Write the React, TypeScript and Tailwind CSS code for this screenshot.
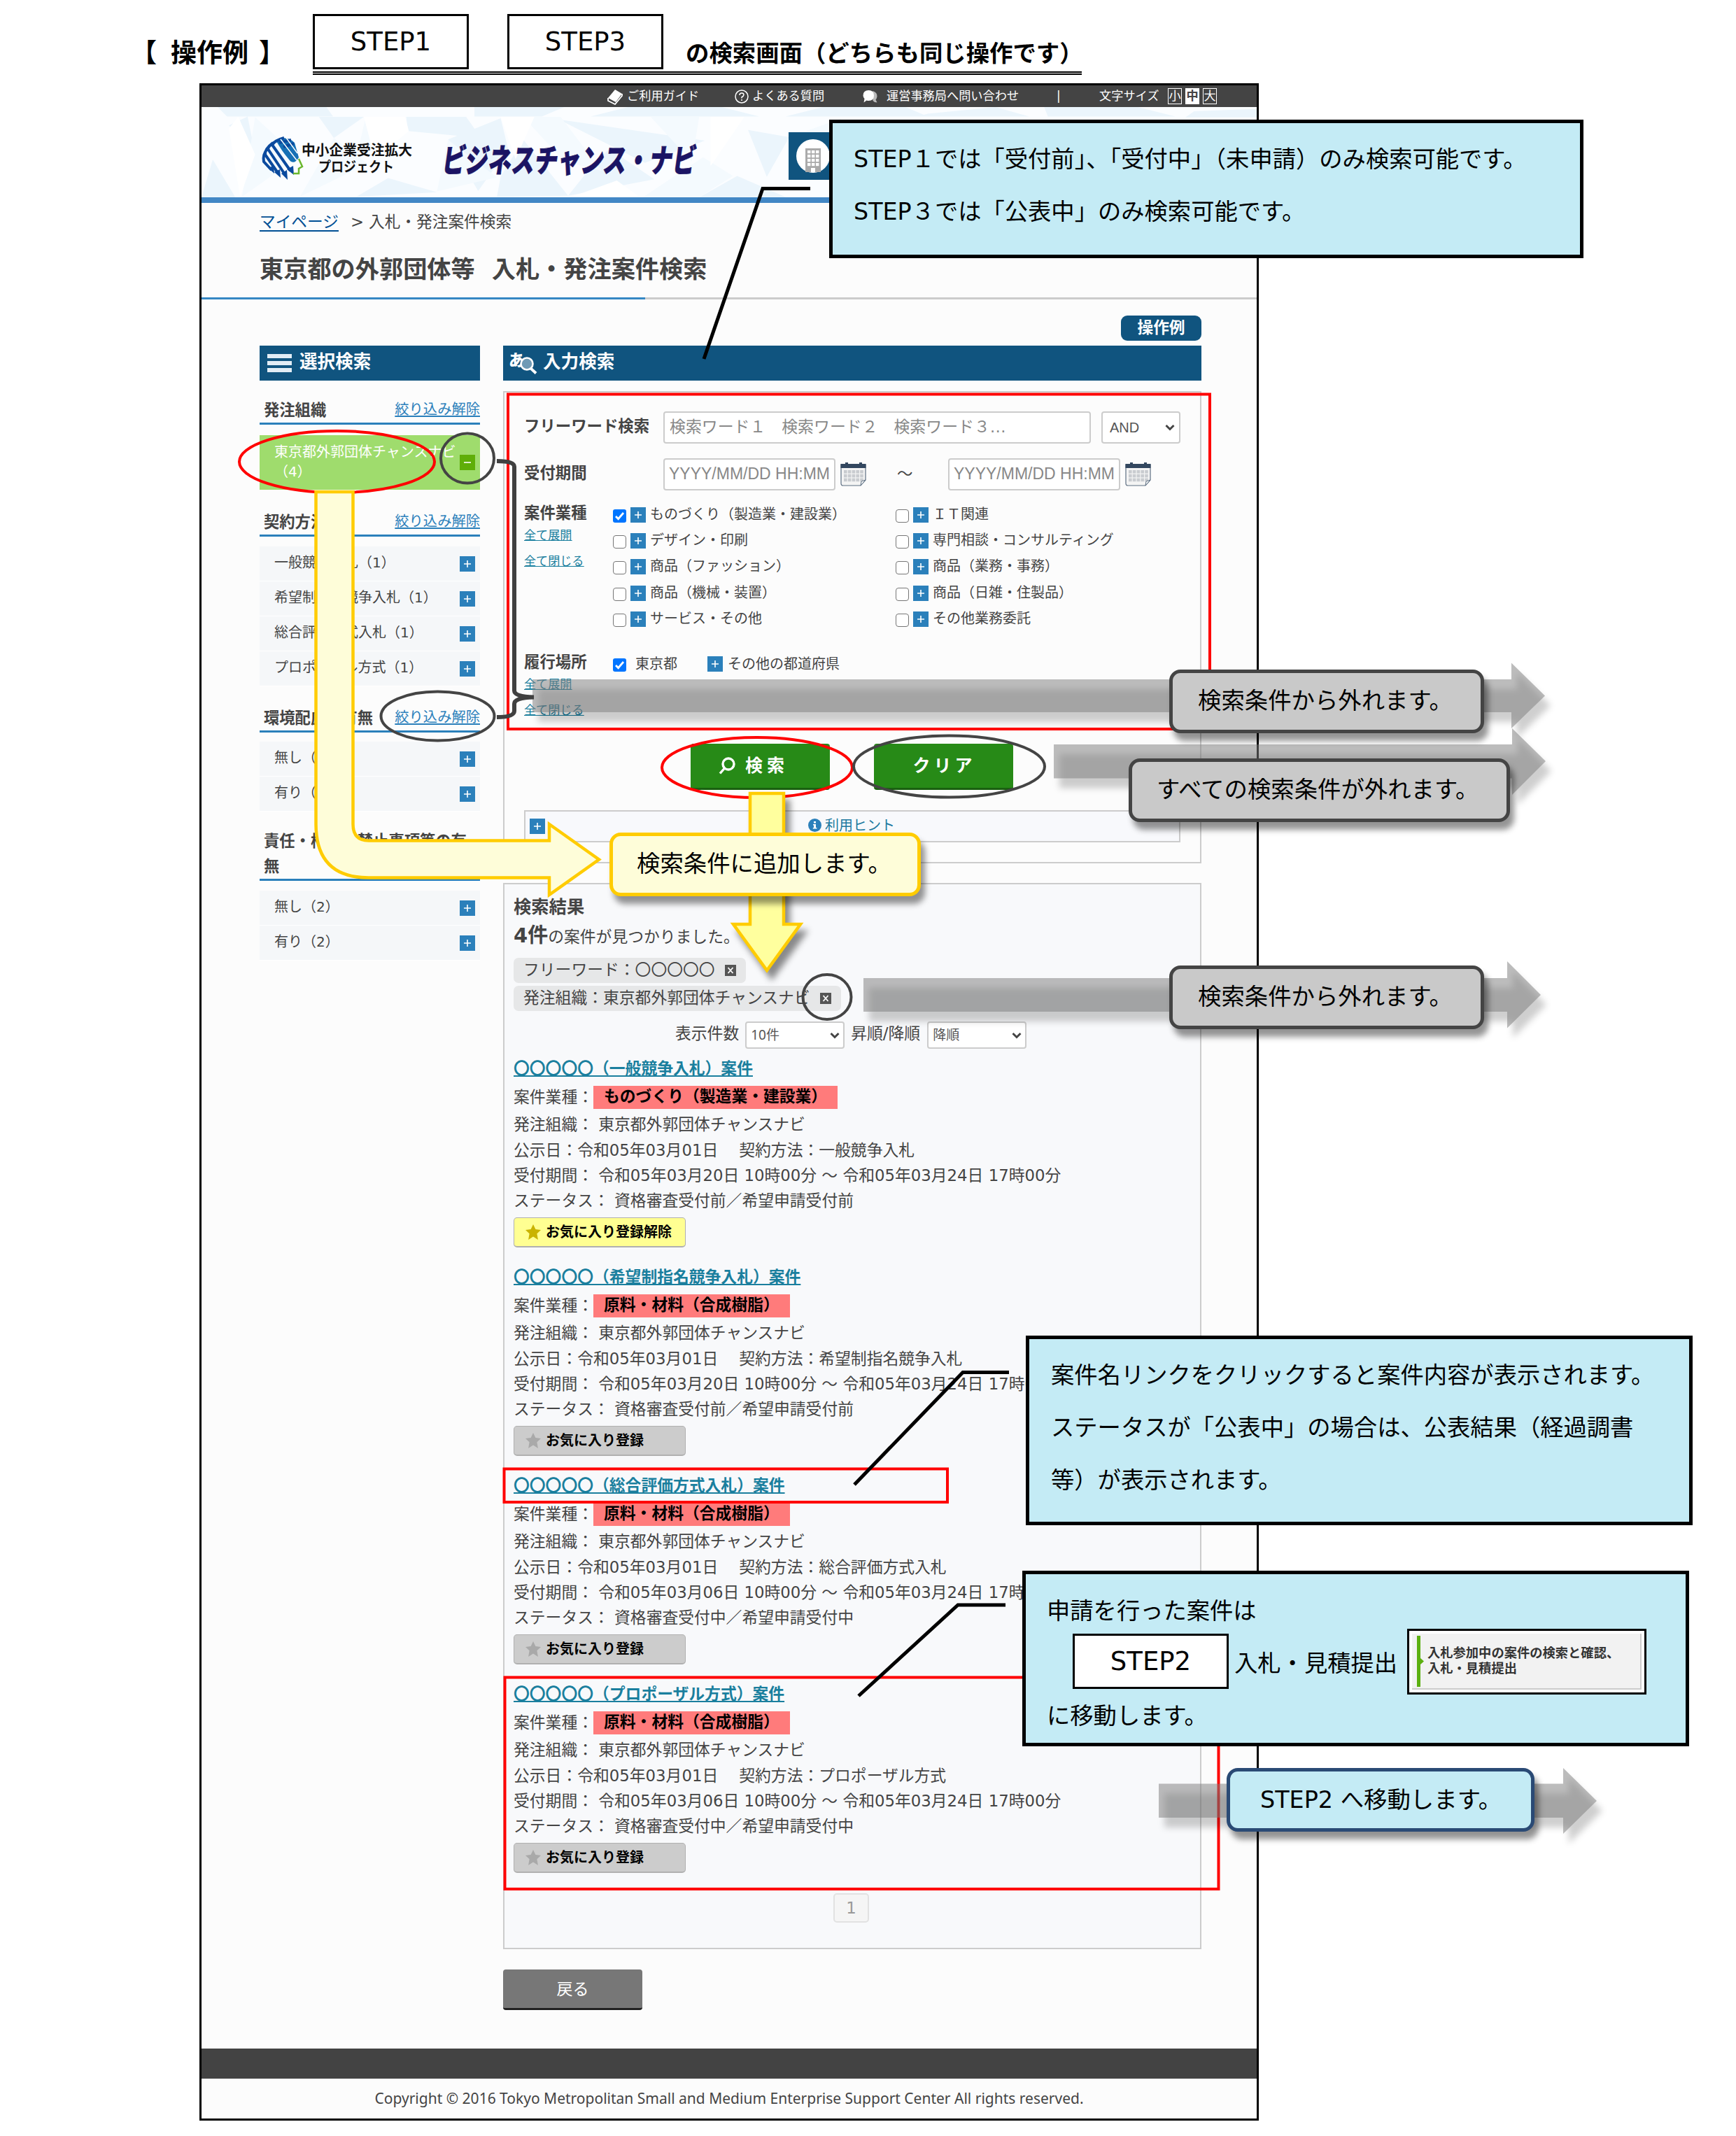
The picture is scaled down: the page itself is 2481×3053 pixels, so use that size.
import type { ReactNode } from "react";
import clsx from "clsx";

interface FacetGroup {
  title: string;
  clearable: boolean;
  headClass: string;
  items: string[];
}

interface ResultItem {
  name: string;
  category: string;
  method: string;
  start: string;
  status: string;
  favorite: boolean;
}

const facetGroups: FacetGroup[] = [
  {
    title: "契約方法",
    clearable: true,
    headClass: "h-[67px] mb-[14px]",
    items: ["一般競争入札（1）", "希望制指名競争入札（1）", "総合評価方式入札（1）", "プロポーザル方式（1）"],
  },
  {
    title: "環境配慮の有無",
    clearable: true,
    headClass: "h-[66px] mb-[13px]",
    items: ["無し（2）", "有り（2）"],
  },
  {
    title: "責任・権限の禁止事項等の有無",
    clearable: false,
    headClass: "h-[99px] mb-[14px]",
    items: ["無し（2）", "有り（2）"],
  },
];

const leftCategories = [
  "ものづくり（製造業・建設業）",
  "デザイン・印刷",
  "商品（ファッション）",
  "商品（機械・装置）",
  "サービス・その他",
];

const rightCategories = [
  "ＩＴ関連",
  "専門相談・コンサルティング",
  "商品（業務・事務）",
  "商品（日雑・住製品）",
  "その他業務委託",
];

const results: ResultItem[] = [
  {
    name: "〇〇〇〇〇（一般競争入札）案件",
    category: "ものづくり（製造業・建設業）",
    method: "一般競争入札",
    start: "令和05年03月20日",
    status: "資格審査受付前／希望申請受付前",
    favorite: true,
  },
  {
    name: "〇〇〇〇〇（希望制指名競争入札）案件",
    category: "原料・材料（合成樹脂）",
    method: "希望制指名競争入札",
    start: "令和05年03月20日",
    status: "資格審査受付前／希望申請受付前",
    favorite: false,
  },
  {
    name: "〇〇〇〇〇（総合評価方式入札）案件",
    category: "原料・材料（合成樹脂）",
    method: "総合評価方式入札",
    start: "令和05年03月06日",
    status: "資格審査受付中／希望申請受付中",
    favorite: false,
  },
  {
    name: "〇〇〇〇〇（プロポーザル方式）案件",
    category: "原料・材料（合成樹脂）",
    method: "プロポーザル方式",
    start: "令和05年03月06日",
    status: "資格審査受付中／希望申請受付中",
    favorite: false,
  },
];

function PlusBox({ minus = false }: { minus?: boolean }) {
  return (
    <span className={clsx("flex size-[22px] shrink-0 items-center justify-center", minus ? "bg-[#5fae09]" : "bg-[#2b80bb]")}>
      <svg width="12" height="12" viewBox="0 0 12 12" stroke="#fff" strokeWidth="1.6">
        <path d={minus ? "M1 6h10" : "M1 6h10M6 1v10"} />
      </svg>
    </span>
  );
}

function Checkbox({ checked = false }: { checked?: boolean }) {
  if (checked) {
    return (
      <span className="flex size-[19px] shrink-0 items-center justify-center rounded-[3px] bg-[#0075ff]">
        <svg width="15" height="15" viewBox="0 0 15 15" fill="none" stroke="#fff" strokeWidth="2.8">
          <path d="M2 8l3.6 3.6L13 3" />
        </svg>
      </span>
    );
  }
  return <span className="block size-[19px] shrink-0 rounded-[4px] border-[1.5px] border-[#767676] bg-white" />;
}

function Chevron() {
  return (
    <svg width="14" height="10" viewBox="0 0 14 10" fill="none" stroke="#444" strokeWidth="3">
      <path d="M1.5 2L7 7.5L12.5 2" />
    </svg>
  );
}

function CalendarIcon() {
  const cols = [0, 1, 2, 3, 4];
  return (
    <svg width="37" height="34" viewBox="0 0 37 34" className="ml-[7px] shrink-0">
      <path d="M1 3h35v22l-7 8H4q-3 0-3-3z" fill="#f4f4f4" stroke="#5d6f82" strokeWidth="1.2" />
      <path d="M0.5 2h36v6h-36z" fill="#33475f" />
      <path d="M7 0h4v3H7zM27 0h4v3h-4z" fill="#33475f" />
      {[0, 1, 2].map((r) => cols.map((c) => <rect key={`${r}-${c}`} x={5 + c * 5.8} y={11 + r * 5.8} width="4.6" height="4.6" fill="#c9ccd0" />))}
      <path d="M29 33l1-6 6-2z" fill="#fff" stroke="#5d6f82" />
    </svg>
  );
}

function StepBox({ children, className }: { children: ReactNode; className?: string }) {
  return (
    <span
      className={clsx(
        "flex h-[79px] w-[223px] shrink-0 items-center justify-center border-[3px] border-black bg-white text-[37px] font-normal leading-none text-black",
        className,
      )}
    >
      {children}
    </span>
  );
}

function SiteHeader() {
  return (
    <>
      <div className="flex h-[31px] items-center bg-[#444] text-[17.2px] leading-none text-white">
        <svg width="24" height="24" viewBox="0 0 24 24" className="ml-[579px]">
          <path d="M2 14L12 2l10 6-9 12z" fill="#fff" />
          <path d="M2 14v4l10 5 10-12V8" fill="none" stroke="#fff" strokeWidth="1.8" />
        </svg>
        <span className="ml-[5px] w-[154px]">ご利用ガイド</span>
        <svg width="20" height="20" viewBox="0 0 20 20" fill="none" stroke="#fff" strokeWidth="1.5">
          <circle cx="10" cy="10" r="9" />
          <path d="M7 8q0-3 3-3t3 2.6q0 1.6-3 3.4v1.6M10 14v2" />
        </svg>
        <span className="ml-[5px] w-[158px]">よくある質問</span>
        <svg width="22" height="20" viewBox="0 0 22 20">
          <path d="M14 2q7 2 6.500 8-.5 3-2 4.500l2 4q-4 0-6-2.500z" fill="#bbb" />
          <path d="M8.500 1q7.500 0 7.500 7.500t-7.500 7.500q-1.500 0-3-.5l-4 3 1-5.500q-2-2-2-4.500 0-7.500 8-7.500z" fill="#fff" />
        </svg>
        <span className="ml-[12px] w-[243px]">運営事務局へ問い合わせ</span>
        <span className="w-[61px] text-[17px]">|</span>
        <span className="w-[98px]">文字サイズ</span>
        <span className="flex gap-[5px]">
          <span className="flex h-[23px] w-[20px] items-center justify-center border border-white">小</span>
          <span className="flex h-[23px] w-[20px] items-center justify-center bg-white font-bold text-[#444]">中</span>
          <span className="flex h-[23px] w-[20px] items-center justify-center border border-white">大</span>
        </span>
      </div>
      <div className="relative h-[137px] border-b-[8px] border-[#4287c5] bg-white">
        <svg className="block" width="1508" height="129" viewBox="202 462 2815 385" preserveAspectRatio="none">
          <rect x="202" y="462" width="2815" height="385" fill="#fbfdff" />
          <g fill="#ebf5fc">
            <path d="M245 462h290l18 40H270zM275 540l50-38 20 160zM515 504h120l-80 90zM748 504h160l40 90-195-30z" />
            <path d="M700 765l130 60-215 20zM1155 515l390 90-160 95zM1000 760l60-160 120 240-190 5zM930 462h240l-60 40H930z" />
            <path d="M1340 462h250l100 40h-450zM1531 846l100-90 130 90zM1660 560l110 30-60 170zM202 846l30-160 60 160z" />
            <path d="M1860 462h220l60 40h-380zM2140 490l180-28 90 40h-300zM2450 462h250l100 40h-340zM2850 480l167-10v36h-190z" />
            <path d="M860 600l140-90 20 130-80 180zM1250 700l40-60 120 130-230 70z" />
          </g>
          <g fill="#f4fafe">
            <path d="M345 505l115 170-150 170zM555 594l90 110-180 140zM640 506l105 50-130 120zM830 822l30-220 130 160z" />
            <path d="M1060 504h100l110 230-100-40zM1400 504h130l-20 190zM1380 846l160-170 80 80-90 90zM1770 590l140-80-100 200z" />
          </g>
          <g fill="#fff">
            <path d="M300 504l45 160-40 180-30-290zM635 504h110l10 60-90 120zM1000 504l90 0-50 180zM1560 504h90l-90 210zM1310 775l60 70h-180z" />
          </g>
        </svg>
        {/* brand mark and site name */}
        <svg className="absolute left-[84px] top-[40px] overflow-visible" width="640" height="80" viewBox="0 0 640 80">
          <path d="M22 7Q38 0 49 11L55 32Q48 44 41 35Q30 22 22 7z" fill="#1570b5" />
          <g fill="none" stroke="#0b4a9e" strokeWidth="4">
            <path d="M34 4Q20 8 17 14L43 51M26 7Q12 14 11 20L35 56M18 11Q6 20 7 28L25 54M10 20Q3 28 5 38L16 50" />
            <path d="M44 7L27 11M48 12L33 17" />
          </g>
          <path d="M29 6L52 36M37 4L53 26" stroke="#fff" strokeWidth="1.4" />
          <path d="M38 49l9-5 1 13zM30 55l8-5 1 14zM20 53l8-4 1 12zM11 47l8-3 1 11z" fill="#0b4a9e" />
          <path d="M55 34l5 11-5 3v7h-8" fill="none" stroke="#6ab82e" strokeWidth="2.5" />
          <g fontFamily="'Noto Sans CJK JP', sans-serif" fontWeight="700" fill="#111">
            <text x="59" y="28.500" fontSize="20" textLength="158" lengthAdjust="spacingAndGlyphs">中小企業受注拡大</text>
            <text x="83" y="52.500" fontSize="20" textLength="108" lengthAdjust="spacingAndGlyphs">プロジェクト</text>
            <text
              x="266"
              y="53"
              fontSize="46"
              fontWeight="900"
              fill="#1b1464"
              stroke="#1b1464"
              strokeWidth="0.8"
              textLength="362"
              lengthAdjust="spacingAndGlyphs"
              transform="skewX(-8)"
            >
              ビジネスチャンス・ナビ
            </text>
          </g>
        </svg>
        {/* nav button, mostly hidden by the first callout */}
        <div className="absolute left-[839px] top-[36px] flex h-[68px] w-[200px] items-center bg-[#10547f] pl-[11px]">
          <svg width="48" height="48" viewBox="0 0 48 48">
            <circle cx="24" cy="24" r="24" fill="#fff" />
            <path d="M13 13h22v34H13z" fill="#aaa" />
            <g fill="#fff">
              {[16, 22, 28, 34].map((y) => [16, 22, 28].map((x) => <rect key={`${x}-${y}`} x={x} y={y} width="4.4" height="4.2" />))}
              <rect x="21" y="41" width="6" height="6" />
            </g>
          </svg>
        </div>
      </div>
    </>
  );
}

function FacetHead({ title, clearable, className }: { title: string; clearable: boolean; className: string }) {
  return (
    <div className={clsx("flex items-end justify-between border-b-[3px] border-[#2b80bb] pl-[6px]", className)}>
      <span className="text-[22.3px] font-bold leading-[36px]">{title}</span>
      {clearable && (
        <a className="shrink-0 text-[20.3px] leading-[37px] text-[#2b80bb] underline underline-offset-2">絞り込み解除</a>
      )}
    </div>
  );
}

function Sidebar() {
  return (
    <aside className="w-[315px] shrink-0">
      <div className="flex h-[50px] items-center bg-[#10547f] pl-[11px] text-[25.6px] font-bold text-white">
        <span className="mr-[11px] flex flex-col gap-[4px]">
          <span className="h-[6px] w-[35px] bg-[#e2edf5]" />
          <span className="h-[6px] w-[35px] bg-[#e2edf5]" />
          <span className="h-[6px] w-[35px] bg-[#e2edf5]" />
        </span>
        <span className="leading-[46px] h-[50px]">選択検索</span>
      </div>
      <FacetHead title="発注組織" clearable className="h-[63px] mb-[15px]" />
      <div className="flex h-[78px] items-center justify-between bg-[#9fdc6d] pl-[21px] pr-[7px] text-[20px] leading-[28px] text-white">
        <span className="-mt-[2px] whitespace-nowrap">
          東京都外郭団体チャンスナビ
          <br />
          <span className="[text-spacing-trim:space-all]">（4）</span>
        </span>
        <PlusBox minus />
      </div>
      {facetGroups.map((group) => (
        <div key={group.title}>
          <FacetHead title={group.title} clearable={group.clearable} className={group.headClass} />
          {group.items.map((item) => (
            <div
              key={item}
              className="flex h-[50px] items-center justify-between border-b border-white bg-[#f5f7f9] pl-[21px] pr-[7px] text-[20px]"
            >
              <span className="-mt-[3px] whitespace-nowrap">{item}</span>
              <PlusBox />
            </div>
          ))}
        </div>
      ))}
    </aside>
  );
}

function FieldLabel({ children, links = false }: { children: ReactNode; links?: boolean }) {
  return (
    <div className={clsx("shrink-0", links ? "w-[127px]" : "w-[199px] pb-[5px]")}>
      <div className="whitespace-nowrap text-[22.4px] font-bold leading-[32px]">{children}</div>
      {links && (
        <div className="flex flex-col text-[17.1px] text-[#1a7f9e] underline">
          <a className="leading-[33px]">全て展開</a>
          <a className="leading-[40px]">全て閉じる</a>
        </div>
      )}
    </div>
  );
}

function DateInput() {
  return (
    <>
      <span className="flex h-[46px] w-[246px] items-center rounded-[4px] border-2 border-[#ccc] bg-white pb-[2px] pl-[6px] text-[23px] text-[#888] [font-family:'Liberation_Sans',sans-serif]">
        YYYY/MM/DD HH:MM
      </span>
      <CalendarIcon />
    </>
  );
}

function CategoryColumn({ items, checkedIndex, className }: { items: string[]; checkedIndex?: number; className?: string }) {
  return (
    <div className={className}>
      {items.map((item, i) => (
        <div key={item} className="flex h-[37.3px] items-center text-[20px]">
          <span className="pt-[3px]">
            <Checkbox checked={i === checkedIndex} />
          </span>
          <span className="mx-[6px]">
            <PlusBox />
          </span>
          <span className="-mt-[2px] whitespace-nowrap">{item}</span>
        </div>
      ))}
    </div>
  );
}

function SearchPanel() {
  return (
    <section className="mt-[15px] h-[675px] border-2 border-[#ccc] bg-[#fcfcfc] px-[28px] pt-[27px]">
      <div className="flex h-[46px] items-center">
        <FieldLabel>フリーワード検索</FieldLabel>
        <span className="flex h-[46px] w-[611px] items-center whitespace-pre rounded-[4px] border-2 border-[#ccc] bg-white pb-[2px] pl-[7px] text-[22.9px] text-[#888]">
          検索ワード１　検索ワード２　検索ワード３…
        </span>
        <span className="ml-[15px] flex h-[46px] w-[113px] items-center justify-between rounded-[4px] border-2 border-[#ccc] bg-white pl-[10px] pr-[6px] text-[20px] text-[#555] [font-family:'Liberation_Sans',sans-serif]">
          AND
          <Chevron />
        </span>
      </div>
      <div className="mt-[21px] flex h-[46px] items-center">
        <FieldLabel>受付期間</FieldLabel>
        <DateInput />
        <span className="w-[117px] pl-[44px] text-[22.5px]">～</span>
        <DateInput />
      </div>
      <div className="mt-[16px] flex h-[213px]">
        <FieldLabel links>案件業種</FieldLabel>
        <CategoryColumn items={leftCategories} checkedIndex={0} className="w-[404px]" />
        <CategoryColumn items={rightCategories} />
      </div>
      <div className="flex h-[133px]">
        <FieldLabel links>履行場所</FieldLabel>
        <div className="flex h-[38px] items-center text-[20px]">
          <span className="pt-[3px]">
            <Checkbox checked />
          </span>
          <span className="ml-[13px] w-[103px]">東京都</span>
          <PlusBox />
          <span className="ml-[7px]">その他の都道府県</span>
        </div>
      </div>
      <div className="flex gap-[63px] pl-[238px] text-[25px] font-bold text-white">
        <button className="flex h-[66px] w-[199px] items-center rounded-[4px] border-b-[3px] border-[#1a6010] bg-[#278a17] pl-[39px] tracking-[6px]">
          <svg width="26" height="26" viewBox="0 0 26 26" fill="none" stroke="#fff" strokeWidth="3.4" className="mr-[13px]">
            <circle cx="15" cy="10" r="8" />
            <path d="M9.5 16L3 23.5" />
          </svg>
          検索
        </button>
        <button className="h-[66px] w-[199px] rounded-[4px] border-b-[3px] border-[#1a6010] bg-[#278a17] pl-[2px] tracking-[5px]">クリア</button>
      </div>
      <div className="mt-[29px] flex h-[46px] items-center border-2 border-[#ccc] bg-[#f8f9fc] pl-[6px]">
        <PlusBox />
        <svg width="19" height="19" viewBox="0 0 19 19" className="-mt-[4px] ml-[376px] mr-[5px]">
          <circle cx="9.5" cy="9.5" r="9.5" fill="#2b80bb" />
          <path d="M8 4h3v2.4H8zM7 8h4v5h1.4v1.6H6.8V13H8V9.6H7z" fill="#fff" />
        </svg>
        <span className="-mt-[3px] text-[20px] leading-[38px] text-[#2079a0]">利用ヒント</span>
      </div>
    </section>
  );
}

function ConditionTag({ children }: { children: ReactNode }) {
  return (
    <div className="flex h-[36px] w-fit items-center rounded-[7px] bg-[#e6e7e8] pl-[14px] pr-[14px]">
      <span className="-mt-[2px] leading-[34px] [text-spacing-trim:space-all]">{children}</span>
      <span className="ml-[14px] flex size-[16px] items-center justify-center bg-[#555]">
        <svg width="10" height="10" viewBox="0 0 10 10" stroke="#fff" strokeWidth="1.8">
          <path d="M1.5 1l7 8M8.5 1l-7 8" />
        </svg>
      </span>
    </div>
  );
}

function Result({ item }: { item: ResultItem }) {
  return (
    <article className="h-[298px] whitespace-pre leading-[35px]">
      <h3 className="h-[36px] font-bold text-[#1a7f9e] underline underline-offset-2">{item.name}</h3>
      <div className="flex h-[44px] items-center">
        <span className="w-[114px]">案件業種：</span>
        <span className="h-[33px] bg-[#ff7b7b] px-[15px] font-bold leading-[31px] text-black">{item.category}</span>
      </div>
      <p className="h-[37px]">発注組織： 東京都外郭団体チャンスナビ</p>
      <p className="h-[36px]">公示日：令和05年03月01日　 契約方法：{item.method}</p>
      <p className="h-[36px]">受付期間： {item.start} 10時00分 ～ 令和05年03月24日 17時00分</p>
      <p className="h-[36px]">ステータス： {item.status}</p>
      <button
        className={clsx(
          "mt-[5px] flex h-[43px] w-[246px] items-center rounded-[5px] border border-b-2 border-[#b0b0b0] pl-[15px] text-[20px] font-bold text-black",
          item.favorite ? "bg-[#ffff92]" : "bg-[#ccc]",
        )}
      >
        <svg width="24" height="24" viewBox="0 0 24 24" className="mr-[6px]" fill={item.favorite ? "#c9b300" : "#a9a9a9"}>
          <path d="M12 1l3.400 7 7.600.9-5.600 5.300 1.500 8.800L12 18.600 5.100 23l1.500-8.800L1 8.900l7.600-.9z" />
        </svg>
        {item.favorite ? "お気に入り登録解除" : "お気に入り登録"}
      </button>
    </article>
  );
}

function SortSelect({ children, className }: { children: ReactNode; className?: string }) {
  return (
    <span
      className={clsx(
        "flex h-[39px] w-[142px] items-center justify-between rounded-[4px] border-2 border-[#ccc] bg-white pl-[6px] pr-[5px] text-[19px] text-[#555] [font-family:'Noto_Sans','Noto_Sans_CJK_JP',sans-serif]",
        className,
      )}
    >
      {children}
      <Chevron />
    </span>
  );
}

function ResultPanel() {
  return (
    <section className="mt-[28px] h-[1524px] border-2 border-[#ccc] bg-[#f8f9fb] pl-[13px] text-[22.8px]">
      <h2 className="h-[53px] pt-[13px] text-[25.3px] font-bold leading-[40px]">検索結果</h2>
      <p className="h-[52px] leading-[41px]">
        <span className="text-[29px] font-bold">4件</span>の案件が見つかりました。
      </p>
      <div className="flex flex-col gap-[4px]">
        <ConditionTag>フリーワード：〇〇〇〇〇</ConditionTag>
        <ConditionTag>発注組織：東京都外郭団体チャンスナビ</ConditionTag>
      </div>
      <div className="mt-[15px] flex h-[39px] items-center pl-[231px]">
        <span className="h-[39px] leading-[34px]">表示件数</span>
        <SortSelect className="ml-[9px] mr-[9px]">10件</SortSelect>
        <span className="h-[39px] w-[109px] leading-[34px]">昇順/降順</span>
        <SortSelect>降順</SortSelect>
      </div>
      <div className="mt-[11px]">
        {results.map((item) => (
          <Result key={item.name} item={item} />
        ))}
      </div>
      <div className="mt-[4px] ml-[457px] flex h-[42px] w-[51px] items-center justify-center rounded-[5px] border-2 border-[#e2e2e2] bg-[#f5f5f5] text-[#999]">
        1
      </div>
    </section>
  );
}

function Screen() {
  return (
    <div className="ml-[285px] h-[2912px] w-[1514px] border-[3px] border-black bg-[#fcfcfc]">
      <SiteHeader />
      <div className="h-[135px] pl-[83px]">
        <div className="flex pt-[10px] text-[22.7px] leading-[34px]">
          <a className="text-[#004f94] underline underline-offset-4">マイページ</a>
          <span className="ml-[17px] w-[26px]">&gt;</span>
          <span>入札・発注案件検索</span>
        </div>
        <h1 className="flex gap-[24px] pt-[26px] text-[34.2px] font-bold leading-[50px]">
          <span>東京都の外郭団体等</span>
          <span>入札・発注案件検索</span>
        </h1>
      </div>
      <div className="flex h-[3px] bg-[#ccc]">
        <div className="w-[634px] bg-[#3587c3]" />
      </div>
      <div className="flex h-[66px] items-start justify-end pr-[79px] pt-[23px]">
        <span className="flex h-[36px] w-[115px] justify-center rounded-[9px] bg-[#10547f] text-[22.7px] font-bold leading-[34px] text-white">
          操作例
        </span>
      </div>
      <div className="flex h-[2378px] pl-[83px]">
        <Sidebar />
        <main className="ml-[33px] w-[998px]">
          <div className="flex h-[50px] items-center bg-[#10547f] pl-[9px] text-[25.6px] font-bold text-white">
            <svg width="40" height="34" viewBox="0 0 40 34" className="mr-[8px] overflow-visible">
              <text x="-1" y="21" fontSize="23" fontWeight="900" fill="#fff" fontFamily="'Noto Sans CJK JP', sans-serif">あ</text>
              <circle cx="25" cy="18" r="8.5" fill="#6f9ab5" stroke="#fff" strokeWidth="2.6" />
              <path d="M31 25l7 6.5" stroke="#fff" strokeWidth="4" />
            </svg>
            <span className="h-[50px] leading-[46px]">入力検索</span>
          </div>
          <SearchPanel />
          <ResultPanel />
          <button className="mt-[29px] h-[58px] w-[199px] rounded-[4px] border-b-[3px] border-[#222] bg-[#777] pt-[2px] text-[23px] text-white">戻る</button>
        </main>
      </div>
      <footer>
        <div className="mt-[56px] h-[43px] bg-[#434343]" />
        <p className="pt-[1px] text-center text-[21px] leading-[54px] whitespace-nowrap [font-family:'Noto_Sans',sans-serif]">
          Copyright © 2016 Tokyo Metropolitan Small and Medium Enterprise Support Center All rights reserved.
        </p>
      </footer>
    </div>
  );
}

/* arrows, rings and leader lines drawn over the screen */
function Markup() {
  return (
    <svg className="pointer-events-none absolute left-0 top-0" width="2481" height="3053" viewBox="0 0 2481 3053" fill="none">
      <g stroke="#f00" strokeWidth="4">
        <rect x="726" y="563.5" width="1003" height="478.5" />
        <rect x="720.5" y="2099.5" width="633.5" height="47.5" />
        <rect x="721.5" y="2397.5" width="1020" height="302.5" />
        <ellipse cx="481.5" cy="660" rx="139.5" ry="44" />
        <ellipse cx="1082" cy="1097" rx="136" ry="43" />
      </g>
      <g stroke="#444" strokeWidth="4">
        <ellipse cx="668" cy="655" rx="38" ry="35.5" />
        <ellipse cx="625.5" cy="1023.5" rx="81" ry="35" />
        <ellipse cx="1356.5" cy="1095.5" rx="136.5" ry="44" />
        <ellipse cx="1182" cy="1425" rx="34.5" ry="32" />
      </g>
      <g fill="rgba(127,127,127,.52)" className="[filter:drop-shadow(8px_14px_5px_rgba(0,0,0,.36))]">
        <path d="M761 971H2160V947.5L2208 994.5L2160 1041V1018H761z" />
        <path d="M1234 1398H2154V1374L2202 1422L2154 1469.5V1446H1234z" />
        <path d="M1656 2549.5H2234V2527L2282 2574L2234 2621V2598H1656z" />
      </g>
      <path
        d="M1506 1064H2161V1041L2209 1088L2161 1136V1112.5H1506z"
        fill="rgba(127,127,127,.52)"
        className="[filter:drop-shadow(8px_14px_5px_rgba(0,0,0,.36))]"
      />
      <path
        d="M710 659Q735 659 735 667V987Q735 996 763 996.5Q735 997 735 1006V1016Q735 1025 710 1025"
        stroke="#404040"
        strokeWidth="6"
      />
      <g stroke="#fc0" strokeWidth="4.5">
        <path d="M451.5 703H504.5V1178Q504.5 1201.5 527 1201.5H785V1178L856 1228.5L785 1279V1254.5H527Q451.5 1254.5 451.5 1178z" fill="#fefdd9" />
        <path
          d="M1072 1134H1120V1321H1144L1096 1387L1048 1321H1072z"
          fill="#ffff9e"
          className="[filter:drop-shadow(7px_11px_5px_rgba(0,0,0,.45))]"
        />
      </g>
      <g stroke="#000" strokeWidth="5">
        <path d="M1158 269.5H1090L1006 513" />
        <path d="M1442 1961.5H1376L1221 2122" />
        <path d="M1437 2294H1369L1227 2424" />
      </g>
    </svg>
  );
}

function Bubble({ children, className }: { children: ReactNode; className: string }) {
  return (
    <div
      className={clsx(
        "absolute flex h-[91px] items-center whitespace-nowrap rounded-[16px] border-[5px] text-[33.4px] text-black shadow-[6px_11px_9px_rgba(0,0,0,.42)]",
        className,
      )}
    >
      {children}
    </div>
  );
}

function Callouts() {
  return (
    <div className="text-[33.3px] leading-[75px] text-black">
      <div className="absolute left-[1185px] top-[171px] h-[198px] w-[1078px] whitespace-nowrap border-[5px] border-black bg-[#c4ebf5] pl-[30px] pt-[14px]">
        <p>STEP１では「受付前」、「受付中」（未申請）のみ検索可能です。</p>
        <p>STEP３では「公表中」のみ検索可能です。</p>
      </div>

      <Bubble className="left-[1671px] top-[957px] w-[450px] border-[#444] bg-[#c9c9c9] pl-[36px] pb-[2px]">検索条件から外れます。</Bubble>
      <Bubble className="left-[1613px] top-[1084px] w-[545px] border-[#444] bg-[#c9c9c9] pl-[35px] pb-[2px]">すべての検索条件が外れます。</Bubble>
      <Bubble className="left-[871px] top-[1190px] w-[445px] border-[#fc0] bg-[#fefdd9] pl-[34px] pb-[2px]">検索条件に追加します。</Bubble>
      <Bubble className="left-[1671px] top-[1380px] w-[450px] border-[#444] bg-[#c9c9c9] pl-[36px] pb-[2px]">検索条件から外れます。</Bubble>

      <div className="absolute left-[1466px] top-[1909px] h-[271px] w-[953px] whitespace-nowrap border-[5px] border-black bg-[#c4ebf5] pl-[31px] pt-[14px]">
        <p>案件名リンクをクリックすると案件内容が表示されます。</p>
        <p>ステータスが「公表中」の場合は、公表結果（経過調書</p>
        <p>等）が表示されます。</p>
      </div>

      <div className="absolute left-[1461px] top-[2245px] h-[251px] w-[953px] whitespace-nowrap border-[5px] border-black bg-[#c4ebf5] pl-[30px] pt-[15px]">
        <p>申請を行った案件は</p>
        <div className="flex h-[75px] items-center pl-[37px]">
          <StepBox className="-mt-[6px]">STEP2</StepBox>
          <span className="ml-[8px] w-[247px]">入札・見積提出</span>
          <span className="-mt-[5px] flex h-[94px] w-[342px] shrink-0 border-[3px] border-black bg-white p-[4px]">
            <span className="flex flex-1 items-center border-b-2 border-r-2 border-[#ccc] bg-[#f2f2f2] pl-[7px]">
              <svg width="11" height="73" viewBox="0 0 11 73" fill="#5cb010" className="mr-[4px]">
                <path d="M0 0h5v32l5 4.5-5 4.5v32H0z" />
              </svg>
              <span className="text-[18.3px] font-bold leading-[22px] text-[#333]">
                入札参加中の案件の検索と確認、
                <br />
                入札・見積提出
              </span>
            </span>
          </span>
        </div>
        <p>に移動します。</p>
      </div>

      <Bubble className="left-[1753px] top-[2527px] w-[440px] border-[#2a4a75] bg-[#c4ebf5] pl-[43px]">STEP2 へ移動します。</Bubble>
    </div>
  );
}

export default function App() {
  return (
    <div className="relative h-[3053px] w-[2481px] overflow-hidden bg-white text-[#444] [font-family:'DejaVu_Sans','Noto_Sans_CJK_JP',sans-serif]">
      <div className="flex h-[119px] items-start pl-[193px] pt-[20px] font-bold text-black">
        <div className="flex h-[87px] w-[254px] items-center whitespace-nowrap pt-[26px] text-[37px] leading-none">
          <span className="-ml-[6px]">【</span>
          <span className="ml-[20px]">操作例</span>
          <span className="ml-[15px]">】</span>
        </div>
        <div className="flex h-[87px] w-[1099px] border-b-[5px] border-double border-black">
          <StepBox>STEP1</StepBox>
          <StepBox className="ml-[55px]">STEP3</StepBox>
          <span className="ml-[32px] whitespace-nowrap pt-[32px] text-[33.4px] leading-[50px]">の検索画面（どちらも同じ操作です）</span>
        </div>
      </div>
      <Screen />
      <Markup />
      <Callouts />
    </div>
  );
}
